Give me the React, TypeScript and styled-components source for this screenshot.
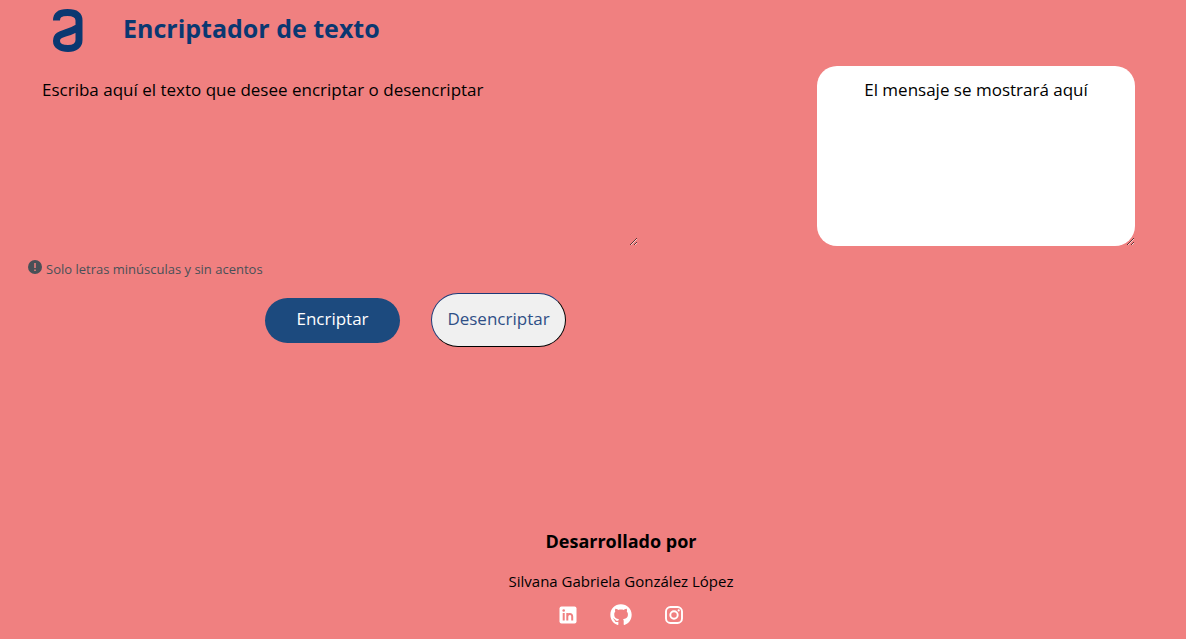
import React from 'react';
import styled, { createGlobalStyle } from 'styled-components';
import { FaGithub } from 'react-icons/fa';

const GlobalStyle = createGlobalStyle`
  * { box-sizing: border-box; }
  body {
    margin: 0;
    background: #f08080;
    color: #000;
    font-family: 'Segoe UI', 'Open Sans', 'Noto Sans', sans-serif;
  }
`;

const Page = styled.div`
  display: flex;
  flex-direction: column;
  min-height: 100vh;
`;

const Header = styled.header`
  display: flex;
  align-items: center;
  gap: 40px;
  padding: 7px 52px 5px;
`;

const Logo = styled.svg`
  width: 31px;
  height: 45px;
`;

const Title = styled.h1`
  margin: 0;
  padding-bottom: 4px;
  color: #0a3871;
  font-size: 25px;
  line-height: 36px;
  font-weight: 700;
`;

const Main = styled.main`
  display: grid;
  grid-template-columns: minmax(0, 610fr) minmax(0, 318fr);
  column-gap: 179px;
  align-items: start;
  padding: 9px 51px 0 28px;
`;

const TextBox = styled.textarea<{ $filled?: boolean }>`
  display: block;
  width: 100%;
  height: 180px;
  padding: 10px 14px;
  border: 0;
  border-radius: ${({ $filled }) => ($filled ? '20px' : '0')};
  background: ${({ $filled }) => ($filled ? '#fff' : 'transparent')};
  text-align: ${({ $filled }) => ($filled ? 'center' : 'left')};
  font-family: inherit;
  font-size: 17px;
  line-height: 27px;
  &::placeholder { color: #000; opacity: 1; }
`;

const Note = styled.p`
  display: flex;
  gap: 4px;
  margin: 14px 0 0;
  color: #495057;
  font-size: 13px;
  line-height: 18px;
`;

const NoteIcon = styled.svg`
  width: 14px;
  height: 14px;
`;

const Actions = styled.div`
  display: flex;
  align-items: center;
  gap: 31px;
  margin-top: 15px;
  padding-left: 237px;
`;

const Button = styled.button<{ $primary?: boolean }>`
  flex: none;
  width: 135px;
  height: ${({ $primary }) => ($primary ? '45px' : '54px')};
  padding: 0 0 2px;
  border: ${({ $primary }) => ($primary ? '0' : '1px solid')};
  border-color: #1d3a78 #000 #000 #1d3a78;
  border-radius: 27px;
  background: ${({ $primary }) => ($primary ? '#1c4a7e' : '#f0f0f0')};
  color: ${({ $primary }) => ($primary ? '#fff' : '#2f4f86')};
  font-family: inherit;
  font-size: 17px;
  line-height: 24px;
`;

const Footer = styled.footer`
  display: flex;
  flex-direction: column;
  align-items: center;
  margin-top: auto;
  padding: 32px 0 13px 56px;
`;

const FooterTitle = styled.h2`
  margin: 0;
  font-size: 18px;
  line-height: 24px;
  font-weight: 700;
`;

const Author = styled.p`
  margin: 16px 0 11px;
  font-size: 15px;
  line-height: 24px;
`;

const Social = styled.nav`
  display: flex;
  gap: 31px;
`;

const SocialLink = styled.a`
  display: flex;
  align-items: center;
  justify-content: center;
  width: 22px;
  height: 22px;
  color: #fff;
`;

const LinkedInIcon = () => (
  <svg width="18" height="18" viewBox="0 0 18 18" aria-hidden="true">
    <rect x="0.5" y="0.5" width="17" height="17" rx="2" fill="#fff" />
    <circle cx="4.7" cy="4.5" r="1.3" fill="#f08080" />
    <path d="M4.7 7V14.5M8.3 7V14.5M8.3 10.8C8.300 7.400 13.2 7 13.2 10.5V14.5" fill="none" stroke="#f08080" strokeWidth="2" />
  </svg>
);

const InstagramIcon = () => (
  <svg width="20" height="20" viewBox="0 0 20 20" fill="none" stroke="#fff" aria-hidden="true">
    <rect x="2" y="2" width="16" height="16" rx="4.5" strokeWidth="1.9" />
    <circle cx="10" cy="10" r="3.7" strokeWidth="1.9" />
    <circle cx="14.7" cy="5.4" r="1.1" fill="#fff" stroke="none" />
  </svg>
);

export default function App() {
  return (
    <Page>
      <GlobalStyle />
      <Header>
        <Logo viewBox="0 0 31 45" fill="none" stroke="#0a3871" strokeWidth="7" aria-hidden="true">
          <path d="M4.5 13.5C4.5 8 8 5.500 15.5 5.5S27 8 27 13.500V33C27 38.500 23 41.500 16 41.500S4.5 38.500 4.5 34C4.5 25 15 28 27 20" />
        </Logo>
        <Title>Encriptador de texto</Title>
      </Header>
      <Main>
        <section>
          <TextBox aria-label="Texto" placeholder="Escriba aquí el texto que desee encriptar o desencriptar" />
          <Note>
            <NoteIcon viewBox="0 0 14 14" aria-hidden="true">
              <circle cx="7" cy="7" r="7" fill="#495057" />
              <path d="M7 3V8M7 9.5V11" stroke="#f08080" strokeWidth="1.5" />
            </NoteIcon>
            Solo letras minúsculas y sin acentos
          </Note>
          <Actions>
            <Button type="button" $primary>Encriptar</Button>
            <Button type="button">Desencriptar</Button>
          </Actions>
        </section>
        <TextBox $filled aria-label="Mensaje" placeholder="El mensaje se mostrará aquí" />
      </Main>
      <Footer>
        <FooterTitle>Desarrollado por</FooterTitle>
        <Author>Silvana Gabriela González López</Author>
        <Social aria-label="Redes sociales">
          <SocialLink href="#linkedin" aria-label="LinkedIn"><LinkedInIcon /></SocialLink>
          <SocialLink href="#github" aria-label="GitHub"><FaGithub size={22} /></SocialLink>
          <SocialLink href="#instagram" aria-label="Instagram"><InstagramIcon /></SocialLink>
        </Social>
      </Footer>
    </Page>
  );
}
